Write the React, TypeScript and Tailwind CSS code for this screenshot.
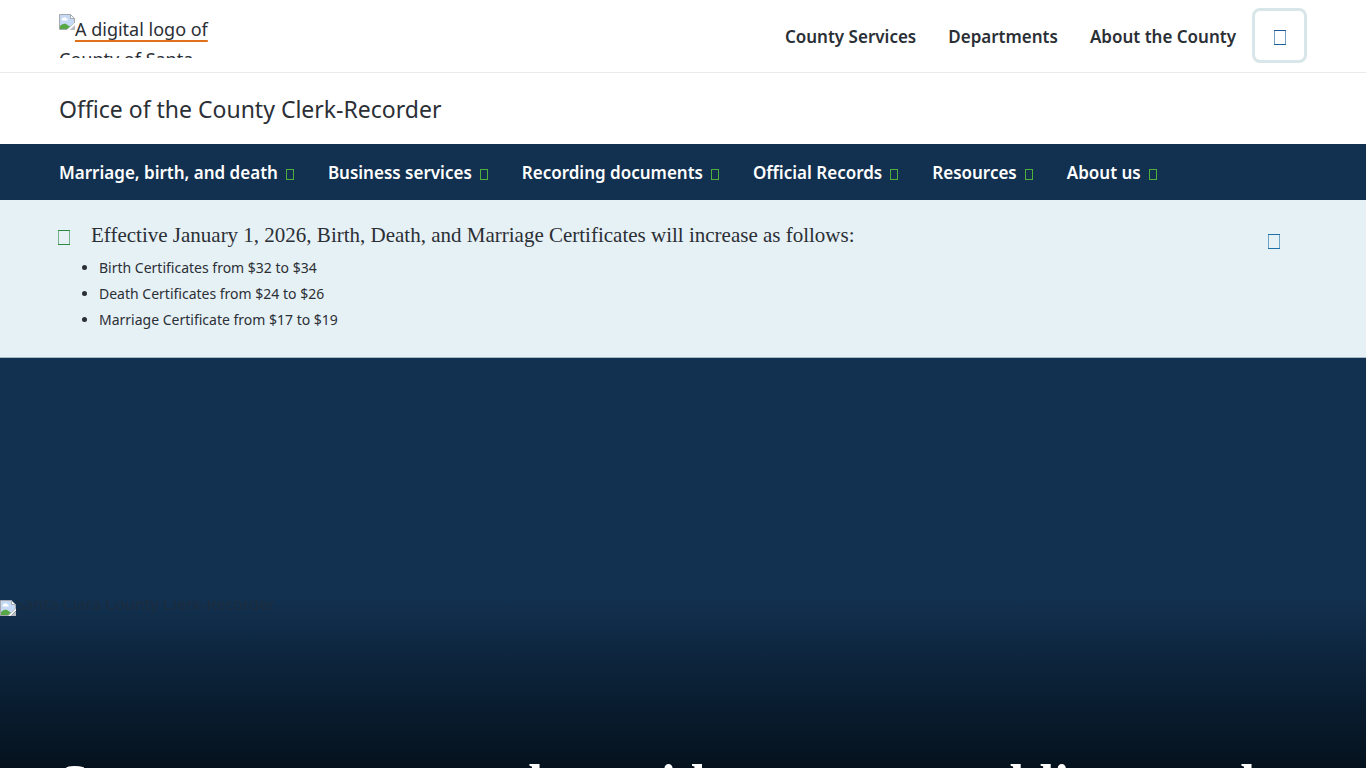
const sans = "font-['Noto_Sans','Open_Sans',sans-serif]";
const serif = "font-['Liberation_Serif',serif]";

const topLinks = ['County Services', 'Departments', 'About the County'];
const menus = [
  'Marriage, birth, and death',
  'Business services',
  'Recording documents',
  'Official Records',
  'Resources',
  'About us',
];
const fees = [
  'Birth Certificates from $32 to $34',
  'Death Certificates from $24 to $26',
  'Marriage Certificate from $17 to $19',
];

function BrokenImage({ className }: { className: string }) {
  return (
    <svg width="16" height="16" viewBox="0 0 16 16" className={className} aria-hidden="true">
      <path d="M0.5 0.5H11.5L15.5 4.5V9L8 15.5H0.5Z" fill="#c5d8f4" stroke="#a5a9ad" />
      <path d="M11.5 0.5V4.5H15.5Z" fill="#fff" stroke="#a5a9ad" />
      <path d="M3 6.5a1.5 1.5 0 0 1 1-2.5 2 2 0 0 1 3.500 .5 1 1 0 0 1 .5 2Z" fill="#fff" />
      <path d="M1 15V12C4 9 7 9 9 11.500L11 12.500 8 15Z" fill="#57a845" />
      <path d="M16 11V16H10.500Z" fill="#b9bcc0" />
      <path d="M8 16L16 8.500V10.500L10.500 16Z" fill="#fff" />
    </svg>
  );
}

function Glyph({ size, className }: { size: 'small' | 'large'; className: string }) {
  return size === 'small' ? (
    <svg width="8" height="11" viewBox="0 0 8 11" className={className} aria-hidden="true">
      <rect x="0.5" y="0.5" width="7" height="10" fill="none" stroke="currentColor" />
    </svg>
  ) : (
    <svg width="12" height="15" viewBox="0 0 12 15" className={className} aria-hidden="true">
      <path d="M0.5 0V15M11.5 0V15" stroke="currentColor" strokeOpacity="0.6" />
      <path d="M0 0.5H12M0 14.5H12" stroke="currentColor" />
    </svg>
  );
}

export default function App() {
  return (
    <div className={`h-screen overflow-hidden bg-white text-[#2b2f36] ${sans}`}>
      <header>
        <div className="flex h-[73px] items-start justify-between border-b border-[#e8eaec] px-[59px]">
          <a href="#home" className="mt-[14px] block h-[44px] w-[160px] overflow-hidden text-[18px] leading-[30px]">
            <BrokenImage className="inline-block align-top" />
            <span className="underline decoration-[#e0701a] decoration-2 underline-offset-4">A digital logo of County of Santa</span>
          </a>
          <div className="flex items-center gap-4 pt-2">
            <nav aria-label="County" className="flex gap-8 pt-[2px]">
              {topLinks.map((t) => (
                <a key={t} href="#county" className="text-[17px] leading-6 font-semibold whitespace-nowrap">{t}</a>
              ))}
            </nav>
            <button aria-label="Search" className="flex h-[55px] w-[55px] items-center justify-center rounded-lg border-3 border-[#d8e6ea] text-[#1d5d9b]">
              <Glyph size="large" className="mt-1" />
            </button>
          </div>
        </div>
        <div className="flex h-[71px] items-center px-[59px]">
          <a href="#office" className="text-[23px] leading-8">Office of the County Clerk-Recorder</a>
        </div>
        <nav aria-label="Main" className="flex h-14 items-center gap-[34px] bg-[#12304f] px-[59px] pt-[2px] text-white">
          {menus.map((t) => (
            <button key={t} className="flex items-center gap-2 text-[17px] leading-6 font-semibold whitespace-nowrap">
              {t}
              <Glyph size="small" className="mt-[2px] text-[#4fae3c]" />
            </button>
          ))}
        </nav>
      </header>
      <section aria-label="Notice" className="flex h-[158px] items-start justify-between border-b border-[#a9bac5] bg-[#e6f1f5] px-[58px] pt-5">
        <div>
          <div className="flex items-center gap-[21px]">
            <Glyph size="large" className="mt-1 text-[#2e8a3e]" />
            <h2 className={`text-[21px] leading-[30px] ${serif}`}>
              Effective January 1, 2026, Birth, Death, and Marriage Certificates will increase as follows:
            </h2>
          </div>
          <ul className="mt-[5px] list-disc pl-[41px] text-[14px] leading-[26px]">
            {fees.map((f) => <li key={f}>{f}</li>)}
          </ul>
        </div>
        <button aria-label="Close notice" className="mt-[14px] mr-7 text-[#1d6fa5]">
          <Glyph size="large" className="block" />
        </button>
      </section>
      <main className="bg-[#12304f] pt-[242px]">
        <div className="h-[168px] overflow-hidden bg-linear-to-b from-[#12304f] to-[#05121e]">
          <div className="flex h-[158px] items-start text-[16px] leading-4 text-[#1b2d3e]">
            <BrokenImage className="shrink-0" />
            <span className="-mt-1">Santa Clara County Clerk-Recorder</span>
          </div>
          <h1 className={`pl-[59px] text-[53px] leading-[50px] font-bold whitespace-nowrap text-white ${serif}`}>
            Secure, preserve, and provide access to public records
          </h1>
        </div>
      </main>
    </div>
  );
}
